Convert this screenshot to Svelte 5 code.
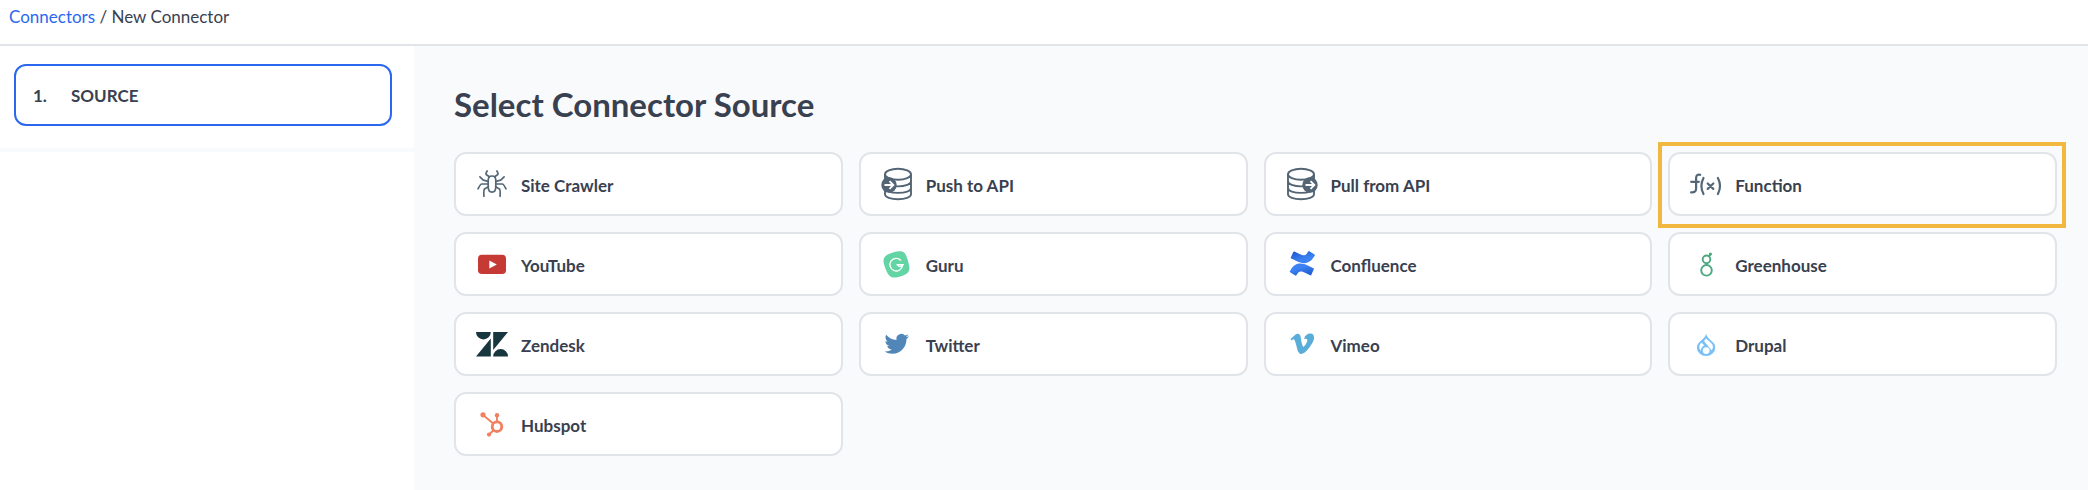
<script>
  const sources = [
    { id: 'crawler', label: 'Site Crawler' },
    { id: 'push', label: 'Push to API' },
    { id: 'pull', label: 'Pull from API' },
    { id: 'function', label: 'Function' },
    { id: 'youtube', label: 'YouTube' },
    { id: 'guru', label: 'Guru' },
    { id: 'confluence', label: 'Confluence' },
    { id: 'greenhouse', label: 'Greenhouse' },
    { id: 'zendesk', label: 'Zendesk' },
    { id: 'twitter', label: 'Twitter' },
    { id: 'vimeo', label: 'Vimeo' },
    { id: 'drupal', label: 'Drupal' },
    { id: 'hubspot', label: 'Hubspot' }
  ];
  const highlighted = 'function';
</script>

<div class="page">
  <header>
    <nav class="crumbs"><a href="#connectors">Connectors</a> / <span>New Connector</span></nav>
  </header>
  <div class="body">
    <aside>
      <div class="steps">
        <button class="step" type="button"><span class="num">1.</span><span>SOURCE</span></button>
      </div>
    </aside>
    <main>
      <h1>Select Connector Source</h1>
      <div class="grid">
        {#each sources as s (s.id)}
          <button type="button" class="card" class:highlighted={s.id === highlighted}>
            <svg class="icon" viewBox="0 0 32 32" aria-hidden="true">
              {#if s.id === 'crawler'}
                <g fill="none" stroke="#536777" stroke-width="1.700" stroke-linecap="round" stroke-linejoin="round">
                  <path d="M16 8c2.400 0 3.800 1.300 3.800 4.300v6.500c0 3.300-1.500 5.400-3.800 5.400s-3.800-2.100-3.800-5.400v-6.500C12.200 9.300 13.600 8 16 8z" />
                  {#each ['', 'translate(32 0) scale(-1 1)'] as flip}
                    <g transform={flip}>
                      <path d="M13.300 8.800L10.200 6.500Q9.500 5.700 11.100 3" />
                      <path d="M12.200 13.300L7.300 12.200L3.900 8.900" />
                      <path d="M12.200 16H5.700Q4.500 16 2 20.800" />
                      <path d="M12.300 18.700L8.500 21Q7.600 21.700 7.900 28.300" />
                    </g>
                  {/each}
                </g>
              {:else if s.id === 'push' || s.id === 'pull'}
                <g transform={s.id === 'push' ? 'translate(31 0) scale(-1 1)' : 'translate(1 0)'}>
                  <g fill="none" stroke="#536575" stroke-width="1.900">
                    <ellipse cx="14" cy="6.300" rx="13" ry="5.500" />
                    <path d="M1 6.300v20c0 2.900 5.800 5 13 5s13-2.100 13-5v-20M1 13.200c0 2.900 5.800 5.200 13 5.200s13-2.300 13-5.200M1 20c0 2.900 5.800 4.900 13 4.900s13-2 13-4.900" />
                  </g>
                  <circle cx="23" cy="17" r="7.700" fill="#536575" />
                </g>
                <path
                  transform={s.id === 'push' ? 'translate(8 17)' : 'translate(24 17)'}
                  d="M-4.500 0H4M.5-3.800L4.300 0L.5 3.800"
                  fill="none" stroke="#fff" stroke-width="1.900" />
              {:else if s.id === 'function'}
                <g fill="none" stroke="#536777" stroke-width="2.200" stroke-linecap="round">
                  <path d="M10.200 6.800C7.600 6.200 6.200 7.200 6.100 10v10.500c0 3-1.700 4.200-5 3.800M1.200 13.800h7.600" />
                  <path d="M13.500 10q-4.200 8 0 16M27.900 10q4.200 8 0 16M17.700 15.500l5.600 5.400M23.300 15.500l-5.600 5.400" />
                </g>
              {:else if s.id === 'youtube'}
                <rect x="2" y="6.700" width="28" height="19.300" rx="3.800" fill="#c63a36" />
                <path d="M13.300 12.500v8l7.500-4z" fill="#fff" />
              {:else if s.id === 'guru'}
                <path d="M12.600 4.300C17 2.900 22 2.600 24 5.500c1.700 2.500 4.400 10.500 4.400 14.500 0 4.400-2.600 6.200-7.300 7.900-4.500 1.600-9.300 2.500-12.300 0C6 25.500 2.500 16.500 2.500 12.400c0-4.800 5.600-6.700 10.100-8.100z" fill="#63d4a4" />
                <path d="M20 12.600A6.300 6.300 0 1 0 21.500 17.200M22.900 16.600H15.500M15.500 16.600c2 .1 2 2 3.500 2 1 0 1.500-.8 1.900-1.900" fill="none" stroke="#fff" stroke-width="1.400" />
              {:else if s.id === 'confluence'}
                <defs>
                  <linearGradient id="wave-low" x1="1" y1="1" x2=".4" y2=".1">
                    <stop offset="0" stop-color="#1853c8" /><stop offset=".8" stop-color="#3d82f3" />
                  </linearGradient>
                  <linearGradient id="wave-high" x1="0" y1="0" x2=".6" y2=".9">
                    <stop offset="0" stop-color="#1853c8" /><stop offset=".8" stop-color="#3d82f3" />
                  </linearGradient>
                </defs>
                <g transform="translate(3.700 2.800) scale(1.050)">
                  <path fill="url(#wave-low)" d="M.87 18.257c-.248.382-.53.875-.763 1.245a.764.764 0 0 0 .255 1.040l4.965 3.054a.764.764 0 0 0 1.058-.26c.199-.332.454-.763.733-1.221 1.967-3.247 3.945-2.853 7.508-1.146l4.957 2.337a.764.764 0 0 0 1.028-.382l2.364-5.346a.764.764 0 0 0-.382-1 599.851 599.851 0 0 1-4.965-2.361C10.911 10.970 5.224 11.185.87 18.257z" />
                  <path fill="url(#wave-high)" d="M23.131 5.743c.249-.405.531-.875.764-1.250a.764.764 0 0 0-.256-1.034L18.675.404a.764.764 0 0 0-1.058.26c-.195.335-.451.763-.734 1.225-1.966 3.246-3.945 2.850-7.508 1.146L4.437.694a.764.764 0 0 0-1.027.382L1.046 6.422a.764.764 0 0 0 .382 1c1.039.490 3.105 1.467 4.965 2.361 6.698 3.246 12.392 3.029 16.738-4.040z" />
                </g>
              {:else if s.id === 'greenhouse'}
                <g fill="none" stroke="#4ea882" stroke-width="1.900">
                  <circle cx="16.500" cy="22.300" r="5.300" />
                  <circle cx="16.500" cy="11.300" r="3.800" />
                  <path d="M16.500 15.100v1.900M19 8.500L20.600 6.200" />
                </g>
                <circle cx="20.400" cy="6" r="1.600" fill="#4ea882" />
              {:else if s.id === 'zendesk'}
                <path d="M0 4h14.800a7.400 7.400 0 0 1-14.800 0zM14.800 10.600V28.500H0zM17.200 4H32L17.200 21.900zM17.200 28.500a7.400 7.400 0 0 1 14.800 0z" fill="#17363d" />
              {:else if s.id === 'twitter'}
                <path transform="translate(3.500 3.600) scale(1.020)" fill="#5186b8" d="M23.953 4.570a10 10 0 0 1-2.825.775 4.958 4.958 0 0 0 2.163-2.723c-.951.555-2.005.959-3.127 1.184a4.920 4.920 0 0 0-8.384 4.482C7.690 8.095 4.067 6.130 1.640 3.162a4.822 4.822 0 0 0-.666 2.475c0 1.710.870 3.213 2.188 4.096a4.904 4.904 0 0 1-2.228-.616v.060a4.923 4.923 0 0 0 3.946 4.827 4.996 4.996 0 0 1-2.212.085 4.936 4.936 0 0 0 4.604 3.417 9.867 9.867 0 0 1-6.102 2.105c-.390 0-.779-.023-1.170-.067a13.995 13.995 0 0 0 7.557 2.209c9.053 0 13.998-7.496 13.998-13.985 0-.210 0-.420-.015-.630A9.935 9.935 0 0 0 24 4.590z" />
              {:else if s.id === 'vimeo'}
                <path transform="translate(4.500 4) scale(.98)" fill="#5aadd8" d="M23.977 6.416c-.105 2.338-1.739 5.543-4.894 9.609-3.268 4.247-6.026 6.370-8.290 6.370-1.409 0-2.578-1.294-3.553-3.881L5.322 11.400C4.603 8.816 3.834 7.522 3.010 7.522c-.179 0-.806.378-1.881 1.132L0 7.197a315.065 315.065 0 0 0 3.501-3.128C5.080 2.701 6.266 1.984 7.055 1.910c1.867-.180 3.016 1.100 3.447 3.838.465 2.953.789 4.789.971 5.507.539 2.450 1.131 3.674 1.776 3.674.502 0 1.256-.796 2.265-2.385 1.004-1.589 1.540-2.797 1.612-3.628.144-1.371-.395-2.061-1.614-2.061-.574 0-1.167.121-1.777.391 1.186-3.868 3.434-5.757 6.762-5.637 2.473.060 3.628 1.664 3.493 4.797z" />
              {:else if s.id === 'drupal'}
                <path d="M16.100 5.800C17 9.500 19.200 10.800 21.100 12.600C23.300 14.700 25.300 16.300 25.300 19.500a9.200 8.600 0 0 1-18.400 0C6.900 16.300 8.900 14.700 11.100 12.600C13 10.800 15.300 9.500 16.100 5.800z" fill="#7ac1f7" />
                <path d="M11.600 14.800L14.200 17.300C12.200 18.400 11.300 20 10.800 22.400C8.600 20 8.800 17 11.600 14.800z" fill="#fff" />
                <path d="M16.100 10.600L14 13L21.500 22.200C24 19.600 23.200 16.800 20.500 14.400C18.800 12.900 17 12 16.100 10.600z" fill="#fff" />
                <circle cx="16.200" cy="22.600" r="3.400" fill="#fff" />
              {:else}
                <g stroke="#f0805f" fill="none">
                  <circle cx="21" cy="18.700" r="4.800" stroke-width="2.900" />
                  <path d="M21 14V7.500M17 15.200L7 7M17.500 22.200L13 26.500" stroke-width="1.900" />
                </g>
                <g fill="#f0805f">
                  <circle cx="21" cy="7.200" r="2.200" />
                  <circle cx="7" cy="6.800" r="2.600" />
                  <circle cx="13" cy="26.600" r="2.100" />
                </g>
              {/if}
            </svg>
            <span class="label">{s.label}</span>
          </button>
        {/each}
      </div>
    </main>
  </div>
</div>

<style>
  :global(body) {
    margin: 0;
  }
  .page {
    display: flex;
    flex-direction: column;
    min-height: 100vh;
    box-sizing: border-box;
    font-family: Lato, sans-serif;
    font-size: 17px;
    line-height: 24px;
    color: #394150;
    background: #fff;
  }
  header {
    padding: 5px 9px 15px;
    border-bottom: 2px solid #e1e4e9;
  }
  a {
    color: #2b67f0;
    text-decoration: none;
  }
  .body {
    flex: 1;
    display: flex;
  }
  aside {
    flex: 0 0 414px;
  }
  .steps {
    padding: 18px 22px 22px 14px;
    border-bottom: 4px solid #f9fafb;
  }
  button {
    display: flex;
    align-items: center;
    width: 100%;
    box-sizing: border-box;
    background: #fff;
    color: inherit;
    font: inherit;
    font-weight: 700;
    text-align: left;
    cursor: pointer;
  }
  .step {
    min-height: 62px;
    padding: 2px 17px 0;
    border: 2px solid #2b67f0;
    border-radius: 12px;
  }
  .num {
    width: 38px;
  }
  main {
    flex: 1;
    min-width: 0;
    padding: 38px 31px 34px 40px;
    background: #f9fafc;
  }
  h1 {
    margin: 0 0 28px;
    font-size: 33px;
    line-height: 40px;
    font-weight: 700;
  }
  .grid {
    display: grid;
    grid-template-columns: repeat(4, minmax(0, 1fr));
    gap: 16px;
  }
  .card {
    position: relative;
    min-height: 64px;
    padding: 0 20px;
    gap: 13px;
    border: 2px solid #e1e4e8;
    border-radius: 12px;
  }
  .highlighted::after {
    content: '';
    position: absolute;
    inset: -12px -11px -14px -12px;
    border: 4px solid #f1b83f;
    pointer-events: none;
  }
  .icon {
    flex: none;
    width: 32px;
    height: 32px;
    overflow: visible;
  }
  .label {
    padding-top: 3px;
  }
</style>
